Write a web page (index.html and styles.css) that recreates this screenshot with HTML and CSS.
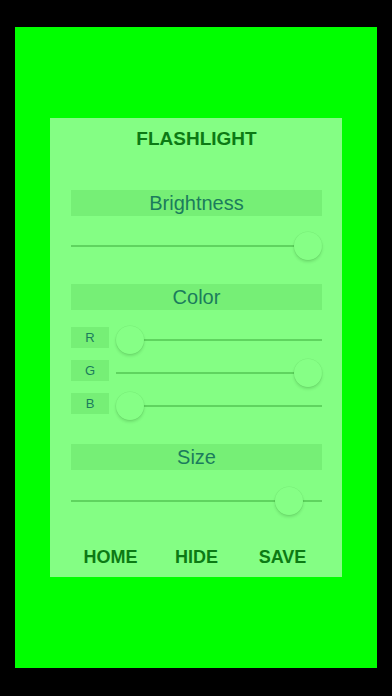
FILE: index.html
```html
<!DOCTYPE html>
<html lang="en">
<head>
<meta charset="utf-8">
<title>Flashlight</title>
<link rel="stylesheet" href="styles.css">
</head>
<body>
<div class="screen">
  <div class="light">
    <div class="panel">
      <div class="title">FLASHLIGHT</div>

      <div class="section-label label-brightness">Brightness</div>
      <div class="slider slider-full"><div class="thumb" style="left: calc(1 * (100% - 28px));"></div></div>

      <div class="section-label label-color">Color</div>
      <div class="rgb">
        <div class="rgb-row">
          <div class="chan">R</div>
          <div class="slider"><div class="thumb" style="left: calc(0 * (100% - 28px));"></div></div>
        </div>
        <div class="rgb-row">
          <div class="chan">G</div>
          <div class="slider"><div class="thumb" style="left: calc(1 * (100% - 28px));"></div></div>
        </div>
        <div class="rgb-row">
          <div class="chan">B</div>
          <div class="slider"><div class="thumb" style="left: calc(0 * (100% - 28px));"></div></div>
        </div>
      </div>

      <div class="section-label label-size">Size</div>
      <div class="slider slider-full slider-size"><div class="thumb" style="left: calc(0.915 * (100% - 28px));"></div></div>

      <div class="buttons">
        <div class="btn">HOME</div>
        <div class="btn">HIDE</div>
        <div class="btn">SAVE</div>
      </div>
    </div>
  </div>
</div>
</body>
</html>
```

FILE: styles.css
```css
html, body {
  margin: 0;
  padding: 0;
  background: #000;
}

body {
  width: 392px;
  height: 696px;
  overflow: hidden;
  font-family: "Liberation Sans", Arial, sans-serif;
}

.screen {
  padding: 27px 15px 28px 15px;
}

.light {
  background: #00ff00;
  height: 641px;
  box-sizing: border-box;
  padding: 91px 35px 0 35px;
}

.panel {
  background: #84fe84;
  height: 459px;
  box-sizing: border-box;
  padding: 10px 20px 0 21px;
  display: flex;
  flex-direction: column;
}

.title {
  height: 22px;
  line-height: 22px;
  font-size: 19px;
  font-weight: bold;
  color: #0c7a14;
  text-align: center;
}

.section-label {
  background: #76ef76;
  height: 26px;
  line-height: 26px;
  font-size: 20px;
  color: #1b7c5c;
  text-align: center;
}

.label-brightness { margin-top: 40px; }
.label-color { margin-top: 23px; }
.label-size { margin-top: 23px; }

.slider {
  position: relative;
  height: 30px;
  flex: 1;
}

.slider::before {
  content: "";
  position: absolute;
  left: 0;
  right: 0;
  top: 14px;
  height: 2px;
  background: #5fd45f;
}

.slider-full {
  flex: none;
  margin-top: 15px;
}

.slider-size {
  margin-top: 16px;
}

.thumb {
  position: absolute;
  top: 1px;
  width: 28px;
  height: 28px;
  border-radius: 50%;
  background: #86ff86;
  box-shadow: 0 2px 3px rgba(0, 60, 0, 0.16), 0 0 0 0.5px rgba(0, 80, 0, 0.08);
}

.rgb {
  margin-top: 15px;
  display: flex;
  flex-direction: column;
  gap: 3px;
}

.rgb-row {
  display: flex;
  align-items: flex-start;
  gap: 7px;
  height: 30px;
}

.chan {
  margin-top: 2px;
  width: 38px;
  height: 21px;
  line-height: 21px;
  background: #76ef76;
  color: #1b7c5c;
  font-size: 13px;
  text-align: center;
}

.buttons {
  margin: 30px -3.5px 0 -3.5px;
  display: grid;
  grid-template-columns: 1fr 1fr 1fr;
}

.btn {
  height: 22px;
  line-height: 22px;
  font-size: 18px;
  font-weight: bold;
  color: #0c7a14;
  text-align: center;
}
```
